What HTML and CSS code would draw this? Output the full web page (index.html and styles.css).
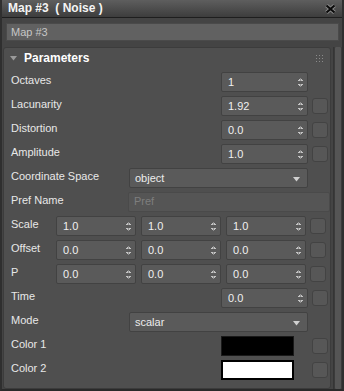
FILE: index.html
```html
<!DOCTYPE html>
<html>
<head>
<meta charset="utf-8">
<link rel="stylesheet" href="styles.css">
</head>
<body>
<div class="window">
  <div class="titlebar">
    <span class="title">Map #3&nbsp;&nbsp;( Noise )</span>
    <svg class="close" width="11" height="10" viewBox="0 0 11 10"><path d="M1.5 1.5 L9.5 8.5 M9.5 1.5 L1.5 8.5" stroke="#8a8a8a" stroke-width="4"/><path d="M1.5 1.5 L9.5 8.5 M9.5 1.5 L1.5 8.5" stroke="#0c0c0c" stroke-width="2.2"/></svg>
  </div>
  <div class="namefield">Map #3</div>
  <div class="body">
    <div class="rollout">
      <div class="rhead">
        <svg class="tri" width="7" height="5" viewBox="0 0 7 5"><path d="M0 0 H7 L3.5 4.5 Z" fill="#9a9a9a"/></svg>
        <span class="rtitle">Parameters</span>
        <svg class="grip" width="7" height="7" viewBox="0 0 7 7" fill="#8a8a8a"><rect x="0" y="0" width="1" height="1"/><rect x="3" y="0" width="1" height="1"/><rect x="6" y="0" width="1" height="1"/><rect x="0" y="3" width="1" height="1"/><rect x="3" y="3" width="1" height="1"/><rect x="6" y="3" width="1" height="1"/><rect x="0" y="6" width="1" height="1"/><rect x="3" y="6" width="1" height="1"/><rect x="6" y="6" width="1" height="1"/></svg>
      </div>

      <div class="row">
        <span class="label">Octaves</span>
        <div class="spin w87"><span>1</span><i class="arr"></i></div>
        <div class="nocheck"></div>
      </div>
      <div class="row">
        <span class="label">Lacunarity</span>
        <div class="spin w87"><span>1.92</span><i class="arr"></i></div>
        <div class="check"></div>
      </div>
      <div class="row">
        <span class="label">Distortion</span>
        <div class="spin w87"><span>0.0</span><i class="arr"></i></div>
        <div class="check"></div>
      </div>
      <div class="row">
        <span class="label">Amplitude</span>
        <div class="spin w87"><span>1.0</span><i class="arr"></i></div>
        <div class="check"></div>
      </div>
      <div class="row">
        <span class="label">Coordinate Space</span>
        <div class="drop"><span>object</span><svg class="darr" width="7" height="5" viewBox="0 0 7 5"><path d="M0 0 H7 L3.5 4.5 Z" fill="#d0d0d0"/></svg></div>
        <div class="nocheck"></div>
      </div>
      <div class="row">
        <span class="label">Pref Name</span>
        <div class="text">Pref</div>
      </div>
      <div class="row">
        <span class="label short">Scale</span>
        <div class="triple">
          <div class="spin"><span>1.0</span><i class="arr"></i></div>
          <div class="spin"><span>1.0</span><i class="arr"></i></div>
          <div class="spin"><span>1.0</span><i class="arr"></i></div>
        </div>
        <div class="check"></div>
      </div>
      <div class="row">
        <span class="label short">Offset</span>
        <div class="triple">
          <div class="spin"><span>0.0</span><i class="arr"></i></div>
          <div class="spin"><span>0.0</span><i class="arr"></i></div>
          <div class="spin"><span>0.0</span><i class="arr"></i></div>
        </div>
        <div class="check"></div>
      </div>
      <div class="row">
        <span class="label short">P</span>
        <div class="triple">
          <div class="spin"><span>0.0</span><i class="arr"></i></div>
          <div class="spin"><span>0.0</span><i class="arr"></i></div>
          <div class="spin"><span>0.0</span><i class="arr"></i></div>
        </div>
        <div class="check"></div>
      </div>
      <div class="row">
        <span class="label">Time</span>
        <div class="spin w87"><span>0.0</span><i class="arr"></i></div>
        <div class="check"></div>
      </div>
      <div class="row">
        <span class="label">Mode</span>
        <div class="drop"><span>scalar</span><svg class="darr" width="7" height="5" viewBox="0 0 7 5"><path d="M0 0 H7 L3.5 4.5 Z" fill="#d0d0d0"/></svg></div>
        <div class="nocheck"></div>
      </div>
      <div class="row">
        <span class="label">Color 1</span>
        <div class="swatch black"></div>
        <div class="check"></div>
      </div>
      <div class="row">
        <span class="label">Color 2</span>
        <div class="swatch white"></div>
        <div class="check"></div>
      </div>
    </div>
    <div class="scroll"><div class="thumb"></div></div>
  </div>
</div>
</body>
</html>
```

FILE: styles.css
```css
* { box-sizing: border-box; }
html, body { margin: 0; padding: 0; }
body {
  width: 344px;
  height: 391px;
  background: #444444;
  font-family: "Liberation Sans", Arial, sans-serif;
  font-size: 11px;
  color: #e6e6e6;
  overflow: hidden;
}
.window {
  height: 391px;
  border-left: 2px solid #2f2f2f;
  border-right: 2px solid #2f2f2f;
  border-bottom: 2px solid #2a2a2a;
  display: flex;
  flex-direction: column;
}
.titlebar {
  height: 18px;
  flex: none;
  background: linear-gradient(#5e5e5e, #3d3d3d);
  border-bottom: 1px solid #1e1e1e;
  display: flex;
  align-items: center;
  padding: 0 6px 0 6px;
}
.title {
  font-weight: bold;
  font-size: 12px;
  color: #f4f4f4;
  flex: 1;
  padding-bottom: 1px;
}
.close { display: block; margin-top: 1px; }
.namefield {
  flex: none;
  margin: 5px 3px 0 4px;
  height: 18px;
  background: #616161;
  border: 1px solid #4a4a4a;
  color: #c6c6c6;
  padding: 2px 0 0 4px;
  font-size: 11px;
}
.body {
  flex: 1;
  display: flex;
  margin-top: 6px;
  min-height: 0;
}
.rollout {
  width: 328px;
  margin-left: 1px;
  background: #4f4f4f;
  border: 1px solid #3c3c3c;
  border-radius: 3px;
  padding: 0 0 6px 0;
  display: flex;
  flex-direction: column;
  gap: 4px;
}
.rhead {
  height: 20px;
  display: flex;
  align-items: center;
  padding: 0 7px 0 6px;
}
.tri { display: block; margin-right: 7px; }
.rtitle {
  font-weight: bold;
  font-size: 12px;
  color: #ffffff;
  flex: 1;
}
.grip { display: block; }
.row {
  height: 20px;
  display: flex;
  align-items: center;
  padding-left: 7px;
  gap: 4px;
}
.label {
  flex: 1;
  color: #e8e8e8;
  white-space: nowrap;
  margin-top: -4px;
}
.row .label.short { flex: none; width: 41px; }
.spin {
  height: 20px;
  background: #5a5a5a;
  border: 1px solid #424242;
  border-radius: 2px;
  display: flex;
  align-items: center;
  padding: 0 4px 0 6px;
  color: #f0f0f0;
}
.spin span { flex: 1; }
.w87 { width: 87px; flex: none; }
.arr {
  width: 5px;
  height: 9px;
  background:
    linear-gradient(to bottom right, transparent 50%, #c4c4c4 50%) 0 0/2.5px 3px no-repeat,
    linear-gradient(to bottom left, transparent 50%, #c4c4c4 50%) 2.5px 0/2.5px 3px no-repeat,
    linear-gradient(to top right, transparent 50%, #c4c4c4 50%) 0 6px/2.5px 3px no-repeat,
    linear-gradient(to top left, transparent 50%, #c4c4c4 50%) 2.5px 6px/2.5px 3px no-repeat;
}
.triple {
  display: flex;
  gap: 5px;
  flex: none;
}
.triple .spin { width: 80px; }
.check {
  width: 16px;
  height: 16px;
  flex: none;
  background: #575757;
  border: 1px solid #434343;
  border-radius: 3px;
  margin-right: 2px;
}
.nocheck { width: 16px; height: 16px; flex: none; margin-right: 2px; }
.drop {
  width: 179px;
  flex: none;
  height: 20px;
  background: #5a5a5a;
  border: 1px solid #424242;
  border-radius: 2px;
  display: flex;
  align-items: center;
  padding: 0 7px 0 5px;
  color: #ececec;
}
.drop span { flex: 1; }
.darr { display: block; margin-top: 2px; }
.text {
  width: 202px;
  flex: none;
  height: 20px;
  background: #555555;
  border: 1px solid #4a4a4a;
  border-radius: 2px;
  color: #7e7e7e;
  padding: 2px 0 0 5px;
}
.swatch {
  width: 73px;
  height: 20px;
  flex: none;
  margin-right: 14px;
}
.swatch.black { background: #000000; border: 1px solid #1a1a1a; }
.swatch.white { background: #ffffff; border: 2px solid #000000; }
.scroll {
  width: 9px;
  margin-left: 2px;
  background: #3b3b3b;
  border-left: 1px solid #353535;
  padding: 0 1px;
}
.thumb {
  height: 100%;
  background: #555555;
  border-radius: 1px;
}
```
